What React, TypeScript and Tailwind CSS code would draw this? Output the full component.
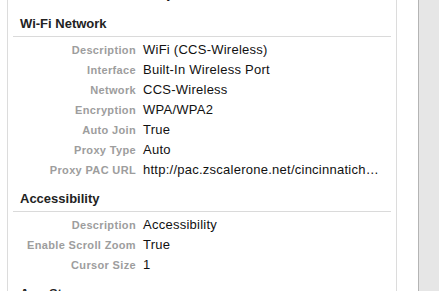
import React from "react";

type Row = { label: string; value: string };

const wifi: Row[] = [
  { label: "Description", value: "WiFi (CCS-Wireless)" },
  { label: "Interface", value: "Built-In Wireless Port" },
  { label: "Network", value: "CCS-Wireless" },
  { label: "Encryption", value: "WPA/WPA2" },
  { label: "Auto Join", value: "True" },
  { label: "Proxy Type", value: "Auto" },
  { label: "Proxy PAC URL", value: "http://pac.zscalerone.net/cincinnatich…" },
];

const accessibility: Row[] = [
  { label: "Description", value: "Accessibility" },
  { label: "Enable Scroll Zoom", value: "True" },
  { label: "Cursor Size", value: "1" },
];

const InfoRow = ({ label, value }: Row) => (
  <div className="flex items-baseline h-5 leading-5">
    <span className="w-[123px] shrink-0 text-right text-[11px] font-bold tracking-[0.35px] text-[#9d9d9d]">
      {label}
    </span>
    <span className="ml-[7px] text-[13px] tracking-[0.25px] text-[#111] whitespace-nowrap">
      {value}
    </span>
  </div>
);

const Section = ({
  title,
  rows,
  className,
}: {
  title: string;
  rows: Row[];
  className?: string;
}) => (
  <section className={className}>
    <h2 className="pl-[7px] text-[13px] leading-4 font-bold text-[#222]">{title}</h2>
    <div className="mt-1 h-px bg-[#dadada]" />
    <div className="mt-[3px] flex flex-col">
      {rows.map((r) => (
        <InfoRow key={r.label} {...r} />
      ))}
    </div>
  </section>
);

export default function App() {
  return (
    <div
      className="flex h-[291px] w-[439px] overflow-hidden bg-white"
      style={{ fontFamily: '"Liberation Sans", Arial, sans-serif' }}
    >
      <div className="w-[7px] shrink-0" />
      <div className="w-[390px] shrink-0 border-x border-[#dcdcdc] px-[5px]">
        <div className="-mt-[16px] h-5 leading-5 flex items-baseline">
          <span className="w-[123px] shrink-0 text-right text-[11px] font-bold tracking-[0.35px] text-[#9d9d9d]">
            Security Type
          </span>
          <span className="ml-[7px] text-[13px] text-[#111]">Entry</span>
        </div>
        <Section title="Wi-Fi Network" rows={wifi} className="mt-3" />
        <Section title="Accessibility" rows={accessibility} className="mt-[11px]" />
        <section className="mt-[11px]">
          <h2 className="pl-[7px] text-[13px] leading-4 font-bold text-[#222]">App Store</h2>
        </section>
      </div>
      <div className="w-[21px] shrink-0" />
      <div className="flex-1 border-l border-[#b4b4b4] bg-[#e6e6e6]" />
    </div>
  );
}
